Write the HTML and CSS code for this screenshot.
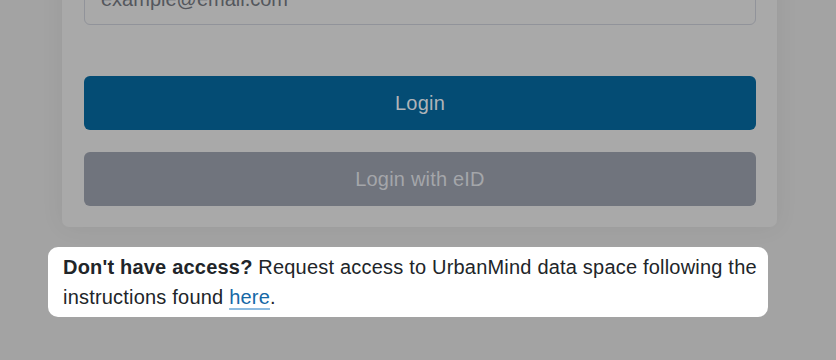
FILE: index.html
```html
<!DOCTYPE html>
<html lang="en">
<head>
<meta charset="utf-8">
<title>Login</title>
<link rel="stylesheet" href="styles.css">
</head>
<body>
<main class="page">
  <section class="card">
    <div class="field">example@email.com</div>
    <button class="btn btn-primary">Login</button>
    <button class="btn btn-secondary">Login with eID</button>
  </section>
  <p class="access"><strong>Don't have access?</strong> Request access to UrbanMind data space following the instructions found <a href="#">here</a>.</p>
</main>
</body>
</html>
```
FILE: styles.css
```css
html, body {
  margin: 0;
  padding: 0;
}
body {
  background: #a3a3a3;
  font-family: "Liberation Sans", Arial, sans-serif;
  width: 836px;
  height: 360px;
  overflow: hidden;
}
.page {
  display: flex;
  flex-direction: column;
}
.card {
  margin: -52px 0 0 62px;
  width: 715px;
  box-sizing: border-box;
  padding: 25px 21px 21px 22px;
  background: #a9a9a9;
  border-radius: 7px;
  box-shadow: 0 0 24px rgba(0, 0, 0, 0.06);
  display: flex;
  flex-direction: column;
}
.field {
  height: 52px;
  box-sizing: border-box;
  border: 1px solid #91939a;
  border-radius: 6px;
  padding: 0 16px;
  display: flex;
  align-items: center;
  font-size: 20px;
  color: #54575d;
  background: #a9a9a9;
}
.btn {
  height: 54px;
  border: none;
  border-radius: 6px;
  font-family: inherit;
  font-size: 20px;
  letter-spacing: 0.2px;
  padding: 0;
  width: 100%;
}
.btn-primary {
  margin-top: 51px;
  background: #044c74;
  color: #b0b4b8;
}
.btn-secondary {
  margin-top: 22px;
  background: #70747d;
  color: #a4a6aa;
}
.access {
  margin: 20px 0 0 48px;
  width: 720px;
  box-sizing: border-box;
  padding: 5px 4px 5px 15px;
  background: #ffffff;
  border-radius: 10px;
  font-size: 20px;
  letter-spacing: 0.2px;
  line-height: 30px;
  color: #212529;
}
.access strong {
  font-weight: 700;
}
.access a {
  color: #1568a6;
  text-decoration: underline;
  text-decoration-color: #8cbbe0;
  text-underline-offset: 4px;
}
```
